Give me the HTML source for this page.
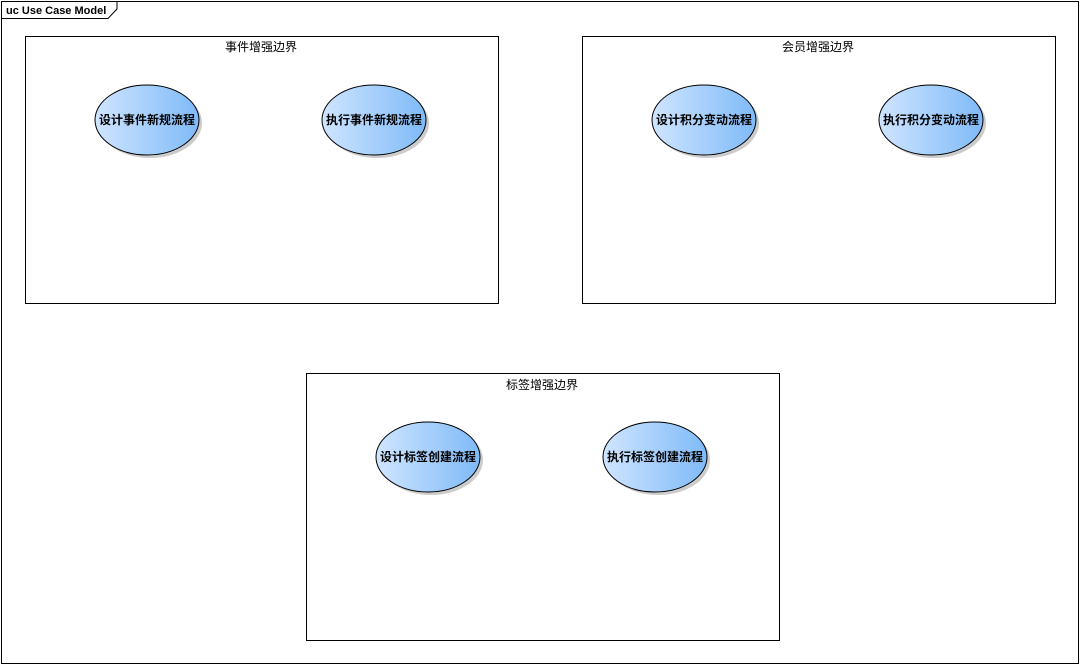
<!DOCTYPE html>
<html><head><meta charset="utf-8"><style>
html,body{margin:0;padding:0;background:#fff}
svg text{font-family:"Liberation Sans","Noto Sans CJK SC",sans-serif}
</style></head><body>
<svg width="1080" height="665" xmlns="http://www.w3.org/2000/svg">
<defs>
<linearGradient id="g" x1="0" x2="1" y1="0" y2="0">
<stop offset="0" stop-color="#cfe5ff"/><stop offset="1" stop-color="#7fbaf8"/>
</linearGradient>
</defs>
<rect x="1.5" y="1.5" width="1077" height="662" fill="#fff" stroke="#000"/>
<path d="M1.5 18.5 H108 L117 9 V1.5" fill="none" stroke="#000"/>
<text x="6" y="14" font-size="11" font-weight="bold">uc Use Case Model</text>

<rect x="25.5" y="36.5" width="473" height="267" fill="#fff" stroke="#000"/>
<text x="261" y="51" font-size="12" text-anchor="middle">事件增强边界</text>
<rect x="582.5" y="36.5" width="473" height="267" fill="#fff" stroke="#000"/>
<text x="818" y="51" font-size="12" text-anchor="middle">会员增强边界</text>
<rect x="306.5" y="373.5" width="473" height="267" fill="#fff" stroke="#000"/>
<text x="542" y="389" font-size="12" text-anchor="middle">标签增强边界</text>

<g font-size="12" font-weight="bold" text-anchor="middle">
<g transform="translate(147,120)"><ellipse cx="3" cy="3" rx="52" ry="35" fill="#ccc"/><ellipse rx="52" ry="35" fill="url(#g)" stroke="#000"/><text y="4">设计事件新规流程</text></g>
<g transform="translate(374,120)"><ellipse cx="3" cy="3" rx="52" ry="35" fill="#ccc"/><ellipse rx="52" ry="35" fill="url(#g)" stroke="#000"/><text y="4">执行事件新规流程</text></g>
<g transform="translate(704,120)"><ellipse cx="3" cy="3" rx="52" ry="35" fill="#ccc"/><ellipse rx="52" ry="35" fill="url(#g)" stroke="#000"/><text y="4">设计积分变动流程</text></g>
<g transform="translate(931,120)"><ellipse cx="3" cy="3" rx="52" ry="35" fill="#ccc"/><ellipse rx="52" ry="35" fill="url(#g)" stroke="#000"/><text y="4">执行积分变动流程</text></g>
<g transform="translate(428,457)"><ellipse cx="3" cy="3" rx="52" ry="35" fill="#ccc"/><ellipse rx="52" ry="35" fill="url(#g)" stroke="#000"/><text y="4">设计标签创建流程</text></g>
<g transform="translate(655,457)"><ellipse cx="3" cy="3" rx="52" ry="35" fill="#ccc"/><ellipse rx="52" ry="35" fill="url(#g)" stroke="#000"/><text y="4">执行标签创建流程</text></g>
</g>
</svg>
</body></html>
